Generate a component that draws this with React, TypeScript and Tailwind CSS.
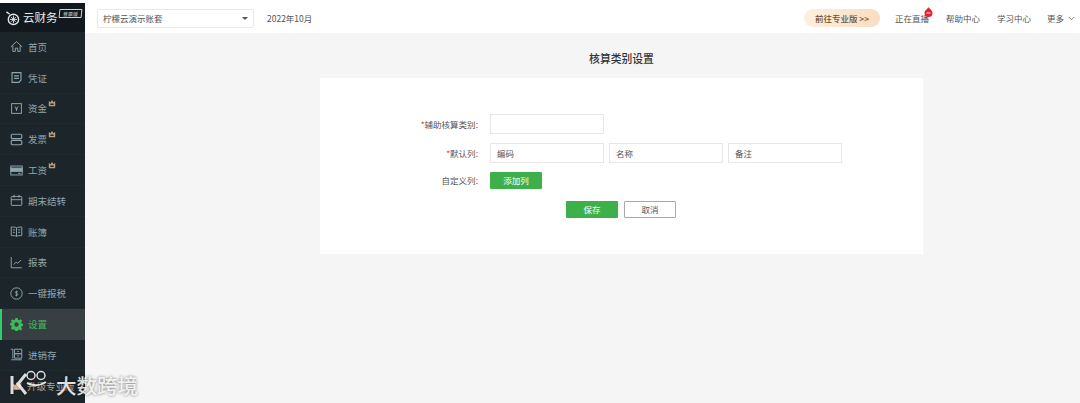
import { ChevronDown } from "lucide-react";
import type { ReactNode } from "react";

const FONT = "font-['Noto_Sans_CJK_SC','Liberation_Sans',sans-serif]";

const ic = {
  width: 13,
  height: 13,
  viewBox: "0 0 16 16",
  fill: "none",
  stroke: "currentColor",
  strokeWidth: 1.2,
};

const icons: Record<string, ReactNode> = {
  home: (
    <svg {...ic}>
      <path d="M1 8.500 8 2l7 6.500M3.500 7v7h3v-4h3v4h3V7" />
    </svg>
  ),
  voucher: (
    <svg {...ic}>
      <path d="M2.500 2h11v9l-2.500 3h-8.500zM5 6h6M5 9h6" strokeWidth="1.400" />
    </svg>
  ),
  fund: (
    <svg {...ic}>
      <rect x="2" y="2" width="12" height="12" />
      <path d="M6 5.500 8 8l2-2.500M8 8v3M6.500 8.500h3" />
    </svg>
  ),
  invoice: (
    <svg {...ic}>
      <rect x="1.500" y="1.500" width="13" height="5.500" rx="1.500" strokeWidth="1.400" />
      <rect x="1.500" y="9" width="13" height="5.500" rx="1.500" strokeWidth="1.400" />
    </svg>
  ),
  salary: (
    <svg {...ic}>
      <rect x="1" y="2.500" width="14" height="11" />
      <rect x="1" y="5" width="14" height="4" fill="currentColor" />
      <path d="M10 11.500h3" />
    </svg>
  ),
  period: (
    <svg {...ic}>
      <rect x="1.500" y="3" width="13" height="11" rx="1" />
      <path d="M5 1v3.500M11 1v3.500M1.500 7h13" />
    </svg>
  ),
  book: (
    <svg {...ic}>
      <path d="M8 3.500C6.500 2.500 4 2.500 1.500 2.500v10.500c2.500 0 5 0 6.500 1 1.500-1 4-1 6.500-1V2.500c-2.500 0-5 0-6.500 1zM8 3.500V14M3.500 6h2.500M3.500 9h2.500M10 6h2.500M10 9h2.500" />
    </svg>
  ),
  report: (
    <svg {...ic}>
      <path d="M1.500 1.500v13h13M4.500 10.500l3-3 2 1.500 4-4" />
    </svg>
  ),
  tax: (
    <svg {...ic}>
      <circle cx="8" cy="8" r="7" />
      <path d="M9.800 6.200C9.300 5.400 6.500 5 6.500 6.600c0 1.700 3.200.9 3.200 2.700 0 1.500-2.800 1.300-3.400.5M8 4.500v7" strokeWidth="1" />
    </svg>
  ),
  settings: (
    <svg width="13" height="13" viewBox="0 0 16 16">
      <path
        fillRule="evenodd"
        fill="currentColor"
        d="M6.600 0h2.800l.4 2.200 1.300.6L13 1.500l2 2-1.300 1.900.6 1.300 2.200.4v2.800l-2.200.4-.6 1.300 1.300 1.900-2 2-1.900-1.300-1.300.6-.4 2.200H6.600l-.4-2.200-1.300-.6L3 14.500l-2-2 1.300-1.900-.6-1.300L-.5 9V6.700l2.200-.4.6-1.300L1 3.500l2-2 1.900 1.300 1.300-.6zM8 5.300a2.700 2.700 0 1 0 0 5.400 2.700 2.700 0 0 0 0-5.400z"
      />
    </svg>
  ),
  stock: (
    <svg {...ic}>
      <path d="M1 1.500h2.500v11.500M1.500 14.500h13M5.500 1.500h9v5.500h-9zM5.500 7h9v5.500h-9zM9 4.200h2M9 9.700h2" />
    </svg>
  ),
  upgrade: (
    <svg width="12" height="12" viewBox="0 0 16 16">
      <path fill="#e8b796" d="M2 4l3.500 3L8 2.500 10.500 7 14 4l-1.500 9h-9z" />
    </svg>
  ),
};

const navItems = [
  { label: "首页", icon: "home" },
  { label: "凭证", icon: "voucher" },
  { label: "资金", icon: "fund", pro: true },
  { label: "发票", icon: "invoice", pro: true },
  { label: "工资", icon: "salary", pro: true },
  { label: "期末结转", icon: "period" },
  { label: "账簿", icon: "book" },
  { label: "报表", icon: "report" },
  { label: "一键报税", icon: "tax" },
  { label: "设置", icon: "settings", active: true },
  { label: "进销存", icon: "stock" },
];

function ProBadge() {
  return (
    <svg className="mb-[11px] ml-px text-[#b89f78]" width="8" height="8" viewBox="0 0 10 10" fill="currentColor">
      <path d="M1 2.500 3.300 4 5 1l1.700 3L9 2.500V9H1zM3 5.500v2h4v-2z" fillRule="evenodd" />
    </svg>
  );
}

function Sidebar() {
  return (
    <aside className="flex w-[84.500px] shrink-0 flex-col overflow-hidden bg-[#1b252a]">
      <div className="flex h-[29px] shrink-0 items-center bg-[#12191e] pl-[5px]">
        <svg width="15" height="16" viewBox="0 0 16 16" className="shrink-0 text-[#dfe5e5]">
          <circle cx="9" cy="9.500" r="5.500" fill="none" stroke="currentColor" strokeWidth="1.500" />
          <path d="M9 5.500v8M5.200 9.500h7.600M6.500 7l5 5M11.500 7l-5 5" stroke="currentColor" strokeWidth="1" />
          <path d="M1.500 1.500 5 4" stroke="currentColor" strokeWidth="1.500" />
        </svg>
        <span className="ml-[3px] whitespace-nowrap text-[11.500px] leading-none text-[#e6eaea]">云财务</span>
        <span className="mb-[8px] ml-[1px] flex h-[9px] w-[23px] -skew-x-6 items-center justify-center whitespace-nowrap rounded-[1px] border border-[#cfd5d5] text-[5px] leading-none text-[#cfd5d5]">
          普票版
        </span>
      </div>
      {navItems.map((item) => (
        <div
          key={item.label}
          className={`flex h-[30.800px] shrink-0 items-center gap-[5px] pl-[10px] text-[9.500px] ${
            item.active
              ? "border-l-[2px] border-[#2fd06c] !pl-[8px] bg-[#383f42] text-[#3dba5c]"
              : "border-b border-[#1f2a2f] text-[#8fa5ad]"
          }`}
        >
          <span className="flex w-[13px] justify-center">{icons[item.icon]}</span>
          <span className="flex items-center whitespace-nowrap">
            {item.label}
            {item.pro && <ProBadge />}
          </span>
        </div>
      ))}
      <div className="flex h-[31px] shrink-0 items-center gap-[4px] pl-[11px] text-[9.500px] text-[#b9a690]">
        {icons.upgrade}
        <span className="whitespace-nowrap">升级专业版</span>
      </div>
    </aside>
  );
}

function Header() {
  return (
    <header className="flex h-[30px] shrink-0 items-center bg-white pl-[12.500px] pr-[4px] text-[8.500px] text-[#555]">
      <div className="flex h-[19px] w-[157px] items-center justify-between rounded-[2px] border border-[#e8e8e8] pl-[5px] pr-[5px]">
        <span>柠檬云演示账套</span>
        <span className="h-0 w-0 border-x-[3px] border-t-[3px] border-x-transparent border-t-[#555]" />
      </div>
      <span className="ml-[13px]">2022年10月</span>
      <div className="ml-auto flex items-center">
        <span className="flex h-[18px] w-[76px] items-center justify-center rounded-full bg-gradient-to-r from-[#fdf0e0] to-[#fbdcc0] font-medium text-[#6d5232]">
          前往专业版 &gt;&gt;
        </span>
        <span className="relative ml-[15px]">
          正在直播
          <svg className="absolute -right-[4px] -top-[5px]" width="9" height="10" viewBox="0 0 9 10">
            <path fill="#e8202a" d="M4.500 0C5 1.500 8.500 3 8.500 6a4 4 0 0 1-8 0C.5 3 4 2 4.500 0z" />
            <path stroke="#fff" strokeWidth="1" d="M2.500 6h4" />
          </svg>
        </span>
        <span className="ml-[17px]">帮助中心</span>
        <span className="ml-[17px]">学习中心</span>
        <span className="ml-[16px] flex items-center gap-[3px]">
          更多
          <ChevronDown size={9} strokeWidth={2} />
        </span>
      </div>
    </header>
  );
}

function FormRow({ label, required, children }: { label: string; required?: boolean; children: ReactNode }) {
  return (
    <div className="flex items-center">
      <span className="w-[170px] whitespace-nowrap pr-[12px] text-right text-[8.500px] text-[#555]">
        {required && <span className="text-[#e0403a]">*</span>}
        {label}:
      </span>
      {children}
    </div>
  );
}

function TextBox({ value }: { value?: string }) {
  return (
    <div className="flex h-[20px] w-[114px] items-center border border-[#e6e6e6] pl-[6px] text-[8.500px] text-[#555]">
      {value}
    </div>
  );
}

export default function App() {
  return (
    <div className={`relative flex h-[403px] w-[1080px] flex-col overflow-hidden bg-[#f5f5f5] ${FONT}`}>
      <div className="h-[3px] shrink-0 bg-white" />
      <div className="flex min-h-0 flex-1">
        <Sidebar />
        <main className="flex min-w-0 flex-1 flex-col">
          <Header />
          <div className="ml-[235.500px] w-[603px]">
            <h1 className="mt-[17px] text-center text-[10.800px] font-medium leading-[17px] text-[#333]">核算类别设置</h1>
            <section className="mt-[11px] h-[176px] bg-white pt-[36px]">
              <div className="flex flex-col">
                <FormRow label="辅助核算类别" required>
                  <TextBox />
                </FormRow>
                <div className="mt-[9px]">
                  <FormRow label="默认列" required>
                    <div className="flex gap-[5px]">
                      <TextBox value="编码" />
                      <TextBox value="名称" />
                      <TextBox value="备注" />
                    </div>
                  </FormRow>
                </div>
                <div className="mt-[9px]">
                  <FormRow label="自定义列">
                    <button className="h-[17px] w-[52px] rounded-[1px] bg-[#3eb049] text-[8.500px] text-white">添加列</button>
                  </FormRow>
                </div>
                <div className="ml-[246px] mt-[12px] flex gap-[6px]">
                  <button className="h-[17px] w-[52px] rounded-[1px] bg-[#3eb049] text-[8.500px] text-white">保存</button>
                  <button className="h-[17px] w-[52px] rounded-[1px] border border-[#aaa] bg-white text-[8.500px] text-[#555]">取消</button>
                </div>
              </div>
            </section>
          </div>
        </main>
      </div>
      {/* watermark */}
      <div className="pointer-events-none absolute bottom-[8px] left-[10px] flex items-end gap-[8px] text-white/85 [text-shadow:0_0_3px_rgba(0,0,0,0.55)]">
        <svg width="38" height="25" viewBox="0 0 38 25" fill="none" stroke="currentColor" strokeWidth="3" className="drop-shadow-[0_0_1px_rgba(0,0,0,0.5)]">
          <path d="M2 6v18M16 4 8 14l8 10" />
          <circle cx="21" cy="5.500" r="4" strokeWidth="1.500" />
          <circle cx="31" cy="5.500" r="4" strokeWidth="1.500" />
          <path d="M17 13c6 3 13 3 19-1" strokeWidth="2" />
        </svg>
        <span className="text-[20.500px] font-medium leading-none">大数跨境</span>
      </div>
    </div>
  );
}
